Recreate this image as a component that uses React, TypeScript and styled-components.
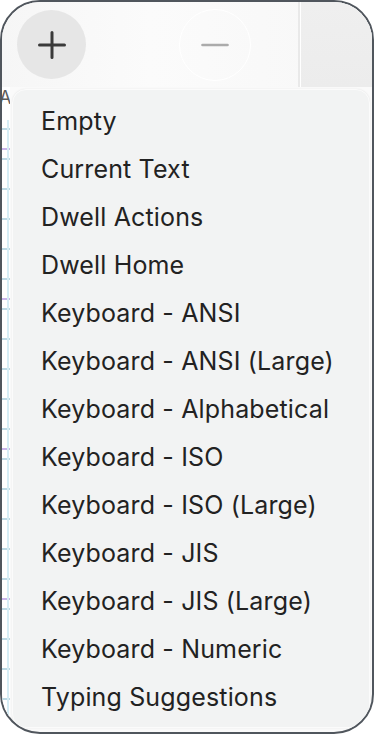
import React from 'react';
import styled, { createGlobalStyle } from 'styled-components';

const GlobalStyle = createGlobalStyle`
  html, body {
    margin: 0;
    padding: 0;
    background: #ffffff;
  }
  body {
    font-family: Inter, "Noto Sans", "Liberation Sans", sans-serif;
  }
`;

const Frame = styled.div`
  box-sizing: border-box;
  width: 374px;
  height: 734px;
  border: 2px solid #50565d;
  border-radius: 40px;
  overflow: hidden;
  display: flex;
  flex-direction: column;
  background: #fafafa;
`;

const Toolbar = styled.div`
  height: 85px;
  flex: none;
  display: flex;
  align-items: stretch;
  background: linear-gradient(90deg, #f6f6f6 0%, #fbfbfb 40%, #f7f7f7 100%);
`;

const ButtonArea = styled.div`
  box-sizing: border-box;
  width: 296px;
  display: flex;
  align-items: center;
  padding-left: 15px;
  gap: 93px;
`;

const RoundButton = styled.button<{ $active?: boolean }>`
  width: ${(p) => (p.$active ? 69 : 72)}px;
  height: ${(p) => (p.$active ? 69 : 72)}px;
  margin: 0;
  padding: 0;
  border-radius: 50%;
  border: ${(p) => (p.$active ? 'none' : '1.5px solid #ffffff')};
  background: ${(p) => (p.$active ? '#e6e6e6' : 'transparent')};
  display: flex;
  align-items: center;
  justify-content: center;
  box-sizing: border-box;
`;

const Divider = styled.div`
  width: 2px;
  background: #e9e9e9;
  border-right: 1px solid #ffffff;
`;

const SidePanel = styled.div`
  flex: 1;
  background: linear-gradient(180deg, #efefef 0%, #ececec 100%);
`;

const Body = styled.div`
  flex: 1;
  display: flex;
  min-height: 0;
`;

const Ruler = styled.div`
  width: 8px;
  flex: none;
  display: flex;
  flex-direction: column;
  background: #ffffff;
  overflow: hidden;
`;

const RulerLabel = styled.span`
  height: 32px;
  flex: none;
  margin-left: -3px;
  padding-top: 1px;
  font-size: 18px;
  line-height: 20px;
  color: #5c5c5c;
`;

const Ticks = styled.div`
  flex: 1;
  background:
    linear-gradient(90deg, transparent 5px, #d6edf5 5px, #d6edf5 7px, transparent 7px),
    repeating-linear-gradient(180deg, transparent 0, transparent 28px, #c9b6ec 28px, #c9b6ec 30px, transparent 30px, transparent 150px),
    repeating-linear-gradient(180deg, transparent 0, transparent 8px, #bcd9e4 8px, #bcd9e4 10px, transparent 10px, transparent 30px);
`;

const Menu = styled.ul`
  flex: 1;
  list-style: none;
  margin: 2px 2px 4px 2px;
  padding: 7px 0 0 0;
  background: #f2f3f3;
  border: 1px solid #fbfbfb;
  border-radius: 14px;
  box-shadow: 0 0 2px rgba(0, 0, 0, 0.08);
`;

const MenuItem = styled.li`
  height: 48px;
  display: flex;
  align-items: center;
  padding-left: 28px;
  font-size: 25px;
  color: #222222;
  letter-spacing: 0.15px;
  white-space: nowrap;
`;

const items = [
  'Empty',
  'Current Text',
  'Dwell Actions',
  'Dwell Home',
  'Keyboard - ANSI',
  'Keyboard - ANSI (Large)',
  'Keyboard - Alphabetical',
  'Keyboard - ISO',
  'Keyboard - ISO (Large)',
  'Keyboard - JIS',
  'Keyboard - JIS (Large)',
  'Keyboard - Numeric',
  'Typing Suggestions',
];

export default function App() {
  return (
    <>
      <GlobalStyle />
      <Frame>
        <Toolbar>
          <ButtonArea>
            <RoundButton $active aria-label="Add">
              <svg width="28" height="28" viewBox="0 0 28 28">
                <path d="M14 1.5v25M1.5 14h25" stroke="#3a3a3a" strokeWidth="3" strokeLinecap="round" />
              </svg>
            </RoundButton>
            <RoundButton aria-label="Remove">
              <svg width="28" height="28" viewBox="0 0 28 28">
                <path d="M1.5 14h25" stroke="#ababab" strokeWidth="2.6" strokeLinecap="round" />
              </svg>
            </RoundButton>
          </ButtonArea>
          <Divider />
          <SidePanel />
        </Toolbar>
        <Body>
          <Ruler>
            <RulerLabel>A</RulerLabel>
            <Ticks />
          </Ruler>
          <Menu>
            {items.map((item) => (
              <MenuItem key={item}>{item}</MenuItem>
            ))}
          </Menu>
        </Body>
      </Frame>
    </>
  );
}
